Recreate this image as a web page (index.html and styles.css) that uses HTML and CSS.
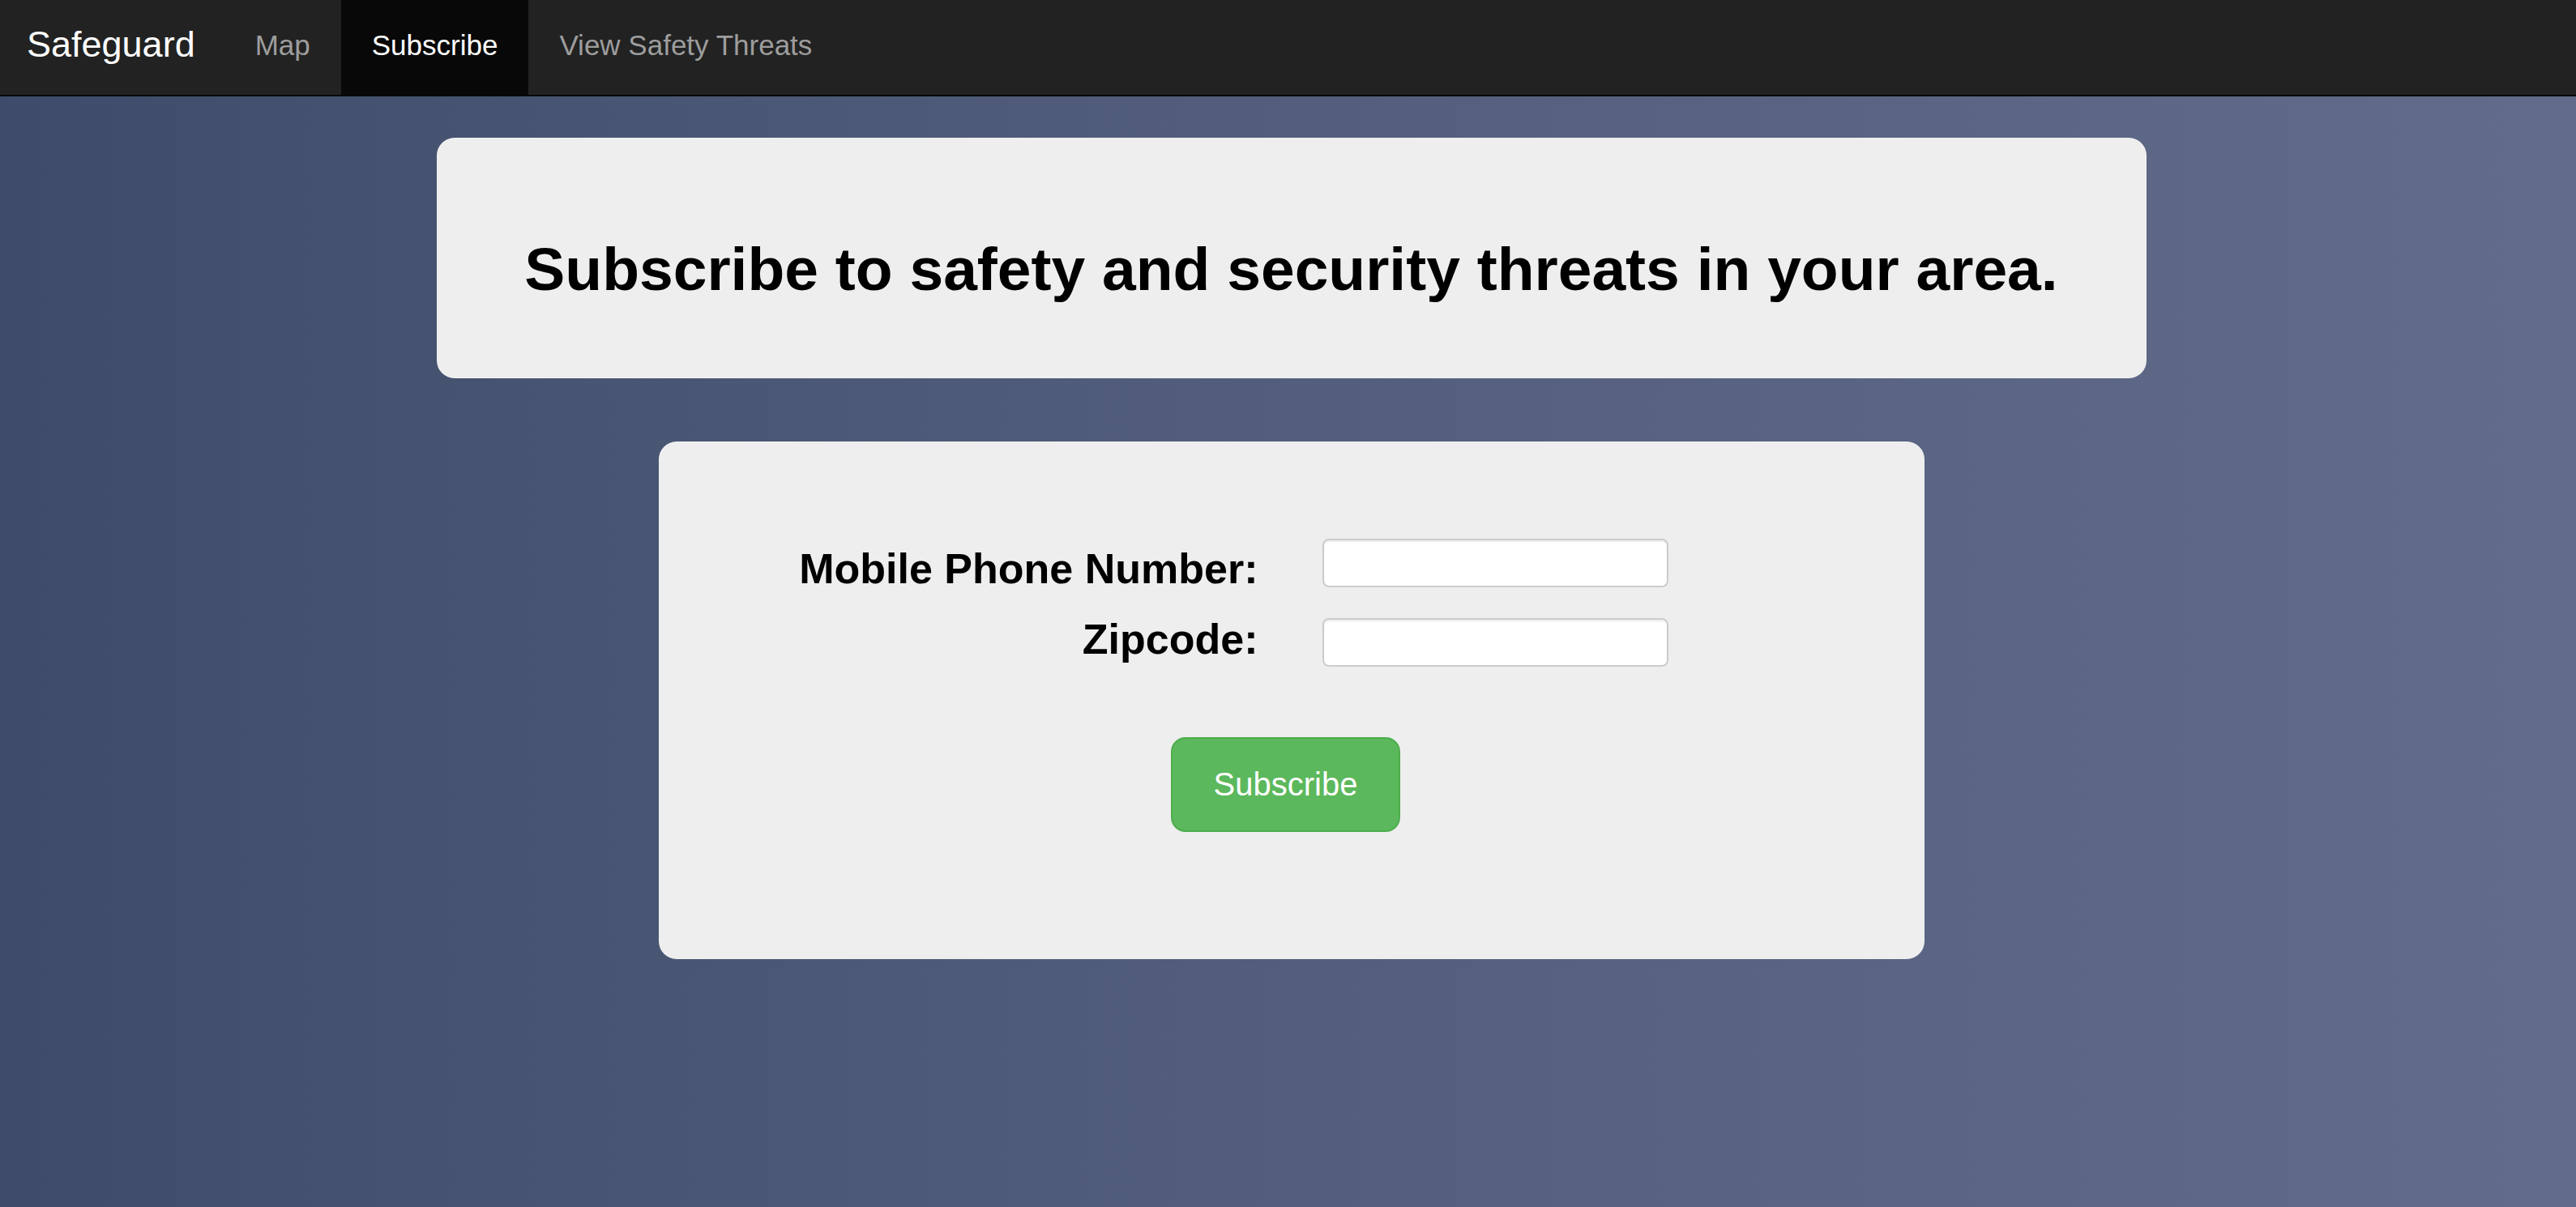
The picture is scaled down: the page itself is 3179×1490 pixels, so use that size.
FILE: index.html
```html
<!DOCTYPE html>
<html lang="en">
<head>
<meta charset="utf-8">
<title>Safeguard - Subscribe</title>
<link rel="stylesheet" href="styles.css">
</head>
<body>
<nav class="navbar">
  <a class="brand" href="#">Safeguard</a>
  <ul class="nav">
    <li><a class="nav-link" href="#">Map</a></li>
    <li><a class="nav-link active" href="#">Subscribe</a></li>
    <li><a class="nav-link" href="#">View Safety Threats</a></li>
  </ul>
</nav>
<main class="main">
  <section class="hero">
    <h1 class="hero-title">Subscribe to safety and security threats in your area.</h1>
  </section>
  <section class="form-card">
    <form class="sub-form">
      <div class="fields">
        <div class="labels">
          <label class="label" for="phone">Mobile Phone Number:</label>
          <label class="label" for="zip">Zipcode:</label>
        </div>
        <div class="inputs">
          <input class="input" id="phone" type="text">
          <input class="input" id="zip" type="text">
        </div>
      </div>
      <div class="actions">
        <button class="btn" type="button">Subscribe</button>
      </div>
    </form>
  </section>
</main>
</body>
</html>
```

FILE: styles.css
```css
html, body {
  margin: 0;
  padding: 0;
  height: 100%;
}

body {
  font-family: "Liberation Sans", Arial, Helvetica, sans-serif;
  background: linear-gradient(to right, #3e4b6a 0%, #4b5875 30%, #56617f 60%, #616b8a 100%);
  min-height: 100vh;
  overflow: hidden;
}

.navbar {
  display: flex;
  align-items: stretch;
  height: 117px;
  background: #222222;
  border-bottom: 2px solid #080808;
}

.brand {
  display: block;
  padding: 0 36px 7px 33px;
  line-height: 110px;
  font-size: 45px;
  color: #ffffff;
  text-decoration: none;
}

.nav {
  display: flex;
  list-style: none;
  margin: 0;
  padding: 0;
}

.nav-link {
  display: block;
  height: 117px;
  box-sizing: border-box;
  padding: 0 38px 5px;
  line-height: 112px;
  font-size: 35px;
  color: #9d9d9d;
  text-decoration: none;
}

.nav-link.active {
  background: #080808;
  color: #ffffff;
}

.main {
  display: flex;
  flex-direction: column;
  align-items: center;
  padding: 51px 0 0 8px;
}

.hero {
  box-sizing: border-box;
  width: 2110px;
  height: 297px;
  background: #eeeeee;
  border-radius: 22px;
  padding: 121px 20px 0;
}

.hero-title {
  margin: 0;
  text-align: center;
  font-size: 75px;
  line-height: 1.1;
  font-weight: bold;
  color: #000000;
}

.form-card {
  box-sizing: border-box;
  width: 1562px;
  height: 639px;
  margin-top: 78px;
  background: #eeeeee;
  border-radius: 22px;
  padding: 114px 0 0 139px;
}

.fields {
  display: grid;
  grid-template-columns: 601px 427px;
  column-gap: 79px;
  align-items: start;
}

.labels {
  display: flex;
  flex-direction: column;
  align-items: flex-end;
}

.label {
  font-size: 52px;
  line-height: 87px;
  font-weight: bold;
  color: #000000;
  white-space: nowrap;
}

.inputs {
  display: flex;
  flex-direction: column;
  gap: 38px;
  margin-top: 6px;
}

.input {
  box-sizing: border-box;
  width: 427px;
  height: 60px;
  margin: 0;
  background: #ffffff;
  border: 2px solid #cccccc;
  border-radius: 8px;
  box-shadow: inset 0 2px 2px rgba(0, 0, 0, 0.075);
  font-size: 34px;
  padding: 0 14px;
  font-family: inherit;
}

.actions {
  display: flex;
  justify-content: center;
  margin-top: 77px;
  margin-left: -139px;
  padding-right: 14px;
}

.btn {
  box-sizing: border-box;
  height: 117px;
  padding: 32px 51px 33px;
  font-family: inherit;
  font-size: 40px;
  line-height: 48px;
  color: #ffffff;
  background: #5cb85c;
  border: 2px solid #4cae4c;
  border-radius: 18px;
  cursor: pointer;
}
```
